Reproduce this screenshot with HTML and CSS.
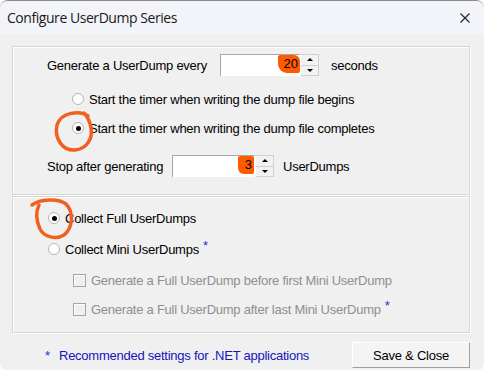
FILE: index.html
```html
<!DOCTYPE html>
<html lang="en">
<head>
    <meta charset="UTF-8">
    <title>Configure UserDump Series</title>
    <link rel="stylesheet" href="styles.css">
</head>
<body>
    <div class="window">
        <div class="titlebar">
            <span class="title">Configure UserDump Series</span>
            <svg class="close" width="10" height="10" viewBox="0 0 10 10">
                <path d="M0.5 0.5L9.5 9.5M9.5 0.5L0.5 9.5" stroke="#222" stroke-width="1.1" fill="none"/>
            </svg>
        </div>

        <div class="dialog-body">
            <div class="group group-timer">
                <div class="field-row row-every">
                    <span class="field-label label-every">Generate a UserDump every</span>
                    <div class="spinner spinner-every">
                        <div class="spin-input"><span class="mark mark-every">20</span></div>
                        <div class="spin-buttons">
                            <span class="spin-btn"><i class="arrow-up"></i></span>
                            <span class="spin-btn"><i class="arrow-down"></i></span>
                        </div>
                    </div>
                    <span class="unit unit-every">seconds</span>
                </div>

                <div class="option option-sub row-begin">
                    <span class="radio"></span>
                    <span>Start the timer when writing the dump file begins</span>
                </div>
                <div class="option option-sub row-complete">
                    <span class="radio checked"></span>
                    <span>Start the timer when writing the dump file completes</span>
                </div>

                <div class="field-row row-stop">
                    <span class="field-label label-stop">Stop after generating</span>
                    <div class="spinner spinner-stop">
                        <div class="spin-input"><span class="mark mark-stop">3</span></div>
                        <div class="spin-buttons">
                            <span class="spin-btn"><i class="arrow-up"></i></span>
                            <span class="spin-btn"><i class="arrow-down"></i></span>
                        </div>
                    </div>
                    <span class="unit unit-stop">UserDumps</span>
                </div>
            </div>

            <div class="group group-kind">
                <div class="option row-full">
                    <span class="radio checked"></span>
                    <span>Collect Full UserDumps</span>
                </div>
                <div class="option row-mini">
                    <span class="radio"></span>
                    <span>Collect Mini UserDumps</span>
                    <sup class="star">*</sup>
                </div>
                <div class="option option-sub option-disabled row-first">
                    <span class="checkbox"></span>
                    <span>Generate a Full UserDump before first Mini UserDump</span>
                </div>
                <div class="option option-sub option-disabled row-last">
                    <span class="checkbox"></span>
                    <span>Generate a Full UserDump after last Mini UserDump</span>
                    <sup class="star">*</sup>
                </div>
            </div>

            <div class="footer">
                <p class="note"><span class="note-star">*</span>Recommended settings for .NET applications</p>
                <button class="save-button">Save &amp; Close</button>
            </div>
        </div>

        <!-- hand drawn marks over the dialog -->
        <svg class="annotations" width="484" height="370" viewBox="0 0 484 370">
            <path d="M88 116 C80 110, 61 112, 57 125 C54 139, 63 151, 75 150 C87 149, 93 138, 91 128 C90 122, 88 117, 84 113"
                  fill="none" stroke="#f2601f" stroke-width="3.5" stroke-linecap="round"/>
            <path d="M32 205 C40 199, 58 198, 66 204 C74 212, 73 228, 64 235 C56 240, 44 237, 40 229 C36 220, 36 211, 39 205"
                  fill="none" stroke="#f2601f" stroke-width="3.5" stroke-linecap="round"/>
        </svg>
    </div>
</body>
</html>
```

FILE: styles.css
```css
* {
    margin: 0;
    padding: 0;
    box-sizing: border-box;
}

body {
    background-color: #ffffff;
    font-family: 'Liberation Sans', Arial, sans-serif;
    font-size: 13px;
    letter-spacing: -0.25px;
    color: #000;
}

.window {
    position: relative;
    width: 484px;
    height: 370px;
    background-color: #f0f0f0;
    border-top: 1px solid #8a8a8a;
    border-radius: 8px 8px 6px 6px;
    overflow: hidden;
}

.titlebar {
    height: 33px;
    background-color: #f3f4f9;
    display: flex;
    align-items: center;
    justify-content: space-between;
    padding: 0 14px 0 7px;
}

.title {
    font-family: 'Open Sans', 'Noto Sans', sans-serif;
    font-size: 14px;
    letter-spacing: -0.45px;
    color: #1a1a1a;
}

.dialog-body {
    padding: 12px 14px 0 12px;
}

.group {
    border: 1px solid #d6d6d6;
    box-shadow: inset 1px 1px 0 #ffffff, 1px 1px 0 #ffffff;
    padding-left: 34px;
}

.group-timer {
    height: 149px;
    padding-top: 7px;
}

.group-kind {
    height: 137px;
    margin-top: 1px;
    padding-top: 10px;
    padding-left: 35px;
}

.field-row {
    display: flex;
    align-items: center;
    height: 22px;
}

.field-label {
    flex-shrink: 0;
}

.label-every {
    width: 173px;
}

.label-stop {
    width: 125px;
}

.spinner {
    display: flex;
    height: 22px;
}

.spin-input {
    width: 80px;
    height: 22px;
    background-color: #ffffff;
    border-top: 1px solid #a8a8a8;
    border-left: 1px solid #a8a8a8;
    display: flex;
    justify-content: flex-end;
}

.spinner-stop .spin-input {
    width: 83px;
}

.mark {
    background-color: #ff5a00;
    color: #000;
    letter-spacing: 0;
    line-height: 18px;
    height: 18px;
    text-align: right;
    padding-right: 2px;
    border-radius: 2px 6px 2px 9px;
}

.mark-every {
    width: 22px;
}

.mark-stop {
    width: 16px;
    margin-right: 1px;
    border-radius: 2px 2px 2px 6px;
}

.spin-buttons {
    width: 19px;
    display: flex;
    flex-direction: column;
}

.spin-btn {
    flex: 1;
    display: flex;
    align-items: center;
    justify-content: center;
    background-color: #f2f2f2;
    border: 1px solid #d0d0d0;
    border-left-color: #ffffff;
}

.spin-btn + .spin-btn {
    border-top: none;
}

.arrow-up,
.arrow-down {
    width: 0;
    height: 0;
    border-left: 3px solid transparent;
    border-right: 3px solid transparent;
}

.arrow-up {
    border-bottom: 3px solid #000;
}

.arrow-down {
    border-top: 3px solid #000;
}

.unit-every {
    margin-left: 12px;
}

.unit-stop {
    margin-left: 9px;
}

.option {
    display: flex;
    align-items: center;
    height: 22px;
    gap: 5px;
}

.option-sub {
    margin-left: 25px;
}

.row-begin {
    margin-top: 12px;
}

.row-complete {
    margin-top: 7px;
}

.row-stop {
    margin-top: 16px;
}

.row-mini {
    margin-top: 9px;
}

.row-first {
    margin-top: 9px;
    margin-left: 25px;
}

.row-last {
    margin-top: 7px;
}

.radio {
    width: 12px;
    height: 12px;
    flex-shrink: 0;
    border-radius: 50%;
    background-color: #ffffff;
    border: 1px solid #b5b5b5;
    display: flex;
    align-items: center;
    justify-content: center;
}

.radio.checked::after {
    content: "";
    width: 5px;
    height: 5px;
    border-radius: 50%;
    background-color: #000;
}

.checkbox {
    width: 13px;
    height: 13px;
    flex-shrink: 0;
    border: 1px solid #a5a5a5;
    background-color: #f0f0f0;
    box-shadow: inset 1px 1px 0 #ffffff;
}

.option-disabled {
    color: #8f8f8f;
}

.star {
    color: #2a2ad0;
    font-size: 13px;
    align-self: flex-start;
    margin-left: -1px;
    line-height: 13px;
    margin-top: 1px;
}

.footer {
    display: flex;
    align-items: center;
    justify-content: space-between;
    padding: 9px 0 0 33px;
}

.note {
    color: #1414c0;
    display: flex;
    align-items: center;
}

.note-star {
    width: 14px;
    color: #2a2ad0;
}

.save-button {
    width: 118px;
    height: 26px;
    font-family: 'Liberation Sans', Arial, sans-serif;
    font-size: 13px;
    letter-spacing: -0.25px;
    color: #000;
    background-color: #f4f4f4;
    border: 1px solid;
    border-color: #ffffff #a0a0a0 #a0a0a0 #ffffff;
    cursor: pointer;
}

.annotations {
    position: absolute;
    top: -1px;
    left: 0;
    pointer-events: none;
}
```
